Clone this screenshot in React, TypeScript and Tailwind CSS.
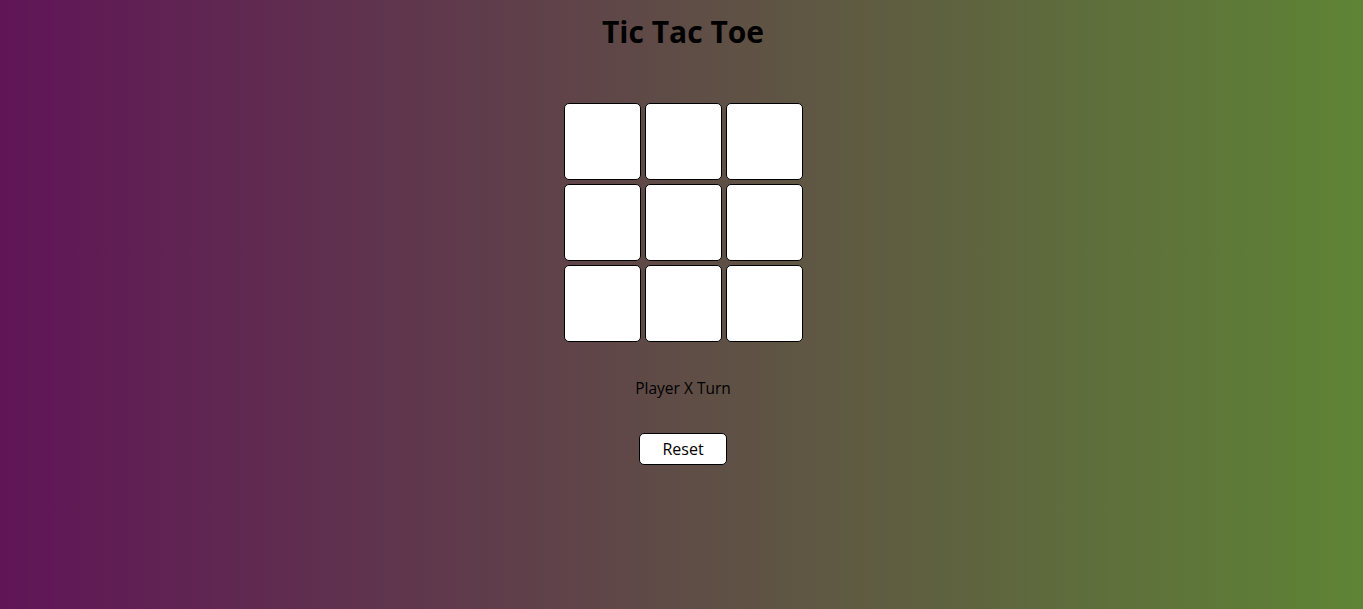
import { useState } from 'react';

export default function App() {
  const [cells, setCells] = useState<(string | null)[]>(Array(9).fill(null));
  const [player, setPlayer] = useState<'X' | 'O'>('X');

  const play = (i: number) => {
    if (cells[i]) return;
    const next = [...cells];
    next[i] = player;
    setCells(next);
    setPlayer(player === 'X' ? 'O' : 'X');
  };

  const reset = () => {
    setCells(Array(9).fill(null));
    setPlayer('X');
  };

  return (
    <div className="min-h-screen pl-[3px] flex flex-col items-center bg-[linear-gradient(to_right,#601557,#5e8435)] font-['Open_Sans',sans-serif] text-black">
      <h1 className="mt-[12px] text-[30px] leading-[40px] font-bold">Tic Tac Toe</h1>

      <div className="mt-[51px] grid grid-cols-3 gap-[4px]">
        {cells.map((c, i) => (
          <button
            key={i}
            onClick={() => play(i)}
            className="w-[77px] h-[77px] bg-white border border-black rounded-[5px] text-3xl font-bold"
          >
            {c}
          </button>
        ))}
      </div>

      <p className="mt-[36px] text-[15.5px] leading-[20px]">Player {player} Turn</p>

      <button
        onClick={reset}
        className="mt-[35px] w-[88px] h-[32px] bg-white border border-black rounded-[5px] text-[16px]"
      >
        Reset
      </button>
    </div>
  );
}
